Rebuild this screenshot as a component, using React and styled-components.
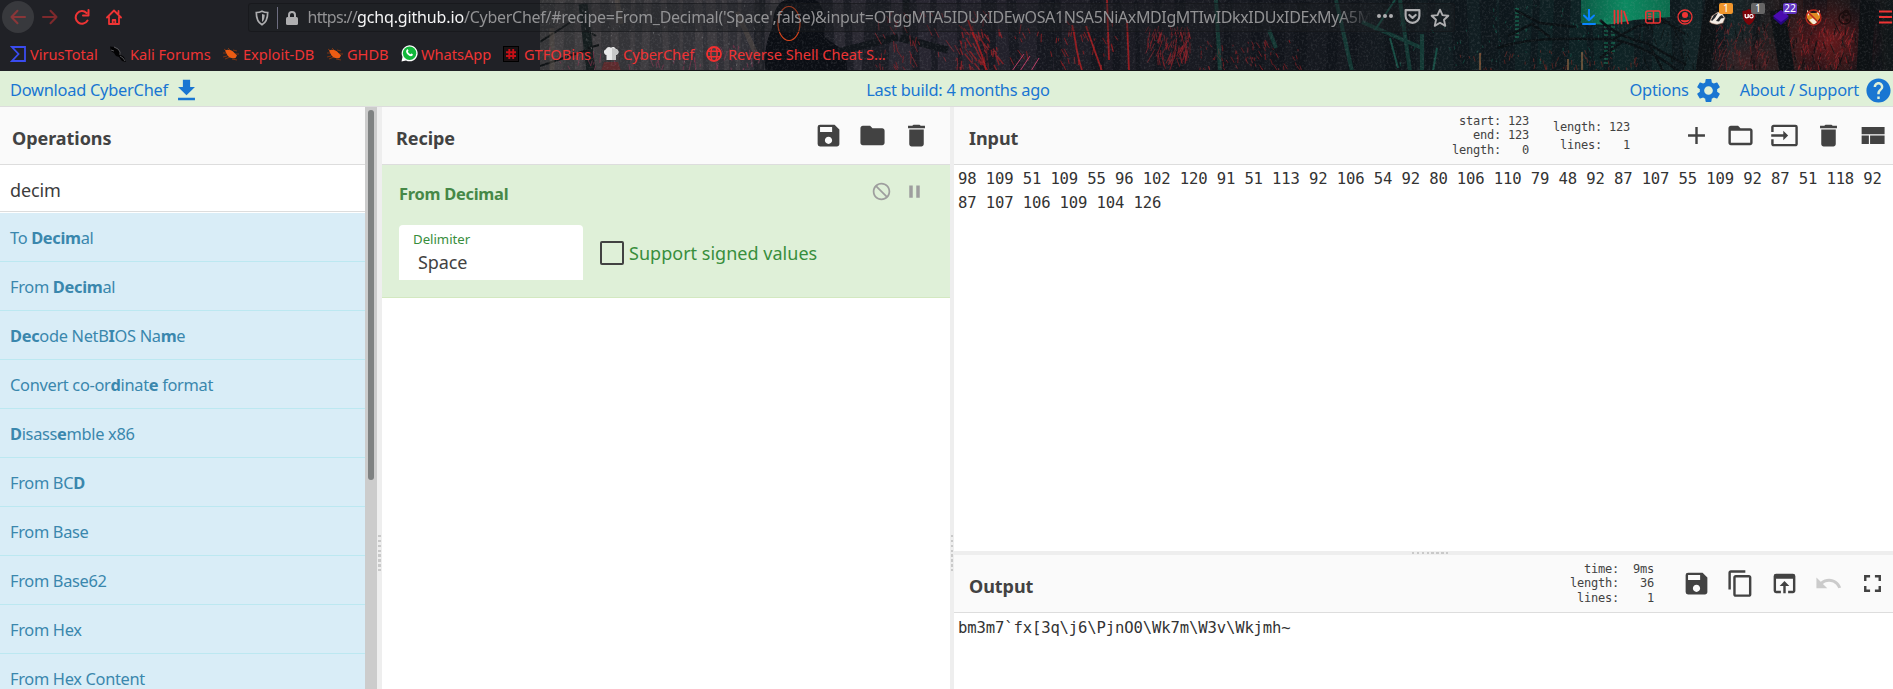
import React from "react";
import styled, { createGlobalStyle } from "styled-components";
import {
  MdSave, MdFolder, MdDelete, MdAdd, MdFolderOpen, MdInput, MdContentCopy,
  MdOpenInBrowser, MdUndo, MdFullscreen, MdSettings, MdHelp, MdPause, MdDoNotDisturb,
} from "react-icons/md";

const Global = createGlobalStyle`
  *, *::before, *::after { box-sizing: border-box; }
  html, body { margin: 0; height: 100%; overflow: hidden; background: #fff; }
  body { font-family: "Noto Sans", "Open Sans", sans-serif; color: #424242; }
  svg { display: block; flex: none; }
`;

const Page = styled.div`
  display: flex;
  flex-direction: column;
  width: 100vw;
  height: 689px;
  overflow: hidden;
`;

/* ---------- browser chrome ---------- */
const Chrome = styled.header`
  position: relative;
  flex: none;
  height: 71px;
  background: #202126;
  overflow: hidden;
  color: #ee3434;
`;
const Backdrop = styled.svg`
  position: absolute;
  top: 0;
  right: 0;
`;
const Toolbar = styled.div`
  position: relative;
  display: flex;
  height: 34px;
`;
const Slot = styled.div`
  position: relative;
  display: flex;
  flex: none;
  align-items: center;
  justify-content: center;
  width: 32px;
  height: 34px;
  opacity: ${(p) => (p.$dim ? 0.45 : 1)};
`;
const NavGroup = styled.div`
  display: flex;
  width: 249px;
  padding-left: 2px;
`;
const BackCircle = styled.div`
  display: flex;
  align-items: center;
  justify-content: center;
  width: 32px;
  height: 32px;
  margin-top: 1px;
  border-radius: 50%;
  background: #38393d;
`;
const UrlBar = styled.div`
  display: flex;
  align-items: center;
  width: 1209px;
  height: 29px;
  margin-top: 3px;
  padding-left: 5px;
  border: 1px solid rgba(20, 20, 24, 0.55);
  border-radius: 3px;
  background: rgba(32, 33, 38, 0.35);
  color: #aeaeb0;
`;
const UrlDivider = styled.span`
  width: 1px;
  height: 22px;
  margin: 0 7px 0 7px;
  background: #6d6d80;
`;
const UrlText = styled.div`
  width: 1066px;
  margin-left: 8px;
  white-space: nowrap;
  font-size: 16px;
  line-height: 27px;
  color: #929294;
  mask-image: linear-gradient(to right, #000 calc(100% - 36px), transparent calc(100% - 2px));
`;
const UrlPart = styled.span`
  letter-spacing: ${(p) => p.$spacing}px;
  color: ${(p) => (p.$host ? "#f5f5f6" : "inherit")};
`;
const UrlActions = styled.div`
  display: flex;
  gap: 9px;
  margin-left: 2px;
`;
const Extensions = styled.div`
  display: flex;
  margin-left: 118px;
`;
const Badge = styled.span`
  position: absolute;
  top: 3px;
  left: 18px;
  min-width: 14px;
  height: 11px;
  padding: 0 1px;
  border-radius: 2px;
  background: ${(p) => p.$color};
  color: #fff;
  font-size: 10.5px;
  line-height: 11px;
  text-align: center;
`;
const Bookmarks = styled.nav`
  position: relative;
  display: flex;
  align-items: center;
  height: 39px;
  padding-left: 10px;
`;
const Bookmark = styled.a`
  display: flex;
  align-items: center;
  gap: ${(p) => p.$gap || 4}px;
  width: ${(p) => p.$width}px;
  font-size: 14.6px;
  line-height: 20px;
  white-space: nowrap;
`;

/* ---------- app ---------- */
const Banner = styled.div`
  display: grid;
  grid-template-columns: 1fr auto 1fr;
  flex: none;
  height: 36px;
  padding-left: 10px;
  border-bottom: 1px solid #ddd;
  background: #dff0d8;
  color: #1976d2;
  font-size: 16.4px;
  line-height: 38px;
  white-space: nowrap;
`;
const BannerSide = styled.div`
  display: flex;
  justify-content: ${(p) => (p.$end ? "flex-end" : "flex-start")};
`;
const BannerItem = styled.a`
  display: flex;
  gap: ${(p) => p.$gap || 0}px;
  margin-left: ${(p) => p.$ml || 0}px;
  letter-spacing: -0.25px;
  svg { margin-top: 5px; }
`;
const Workspace = styled.main`
  display: flex;
  flex: 1;
  min-height: 0;
`;
const OpsColumn = styled.section`
  display: flex;
  width: 377px;
  overflow: hidden;
`;
const OpsBody = styled.div`
  width: 365px;
`;
const ScrollTrack = styled.div`
  width: 12px;
  padding: 3px 3px 0;
  background: #ccc;
`;
const ScrollThumb = styled.div`
  height: 370px;
  border-radius: 3px;
  background: #7f8282;
`;
const ColumnGutter = styled.div`
  display: flex;
  flex: none;
  align-items: center;
  justify-content: center;
  width: ${(p) => p.$size}px;
  padding-top: 311px;
  background: #eee;
`;
const RowGutter = styled.div`
  display: flex;
  flex: none;
  align-items: center;
  justify-content: center;
  height: 4px;
  padding-left: 14px;
  background: #eee;
`;
const Grip = styled.i`
  width: ${(p) => (p.$horizontal ? 37 : p.$thick)}px;
  height: ${(p) => (p.$horizontal ? 2 : 37)}px;
  background: repeating-linear-gradient(
    ${(p) => (p.$horizontal ? "90deg" : "180deg")},
    #c9c9c9 0 2.4px, transparent 2.4px 4.86px
  );
`;
const TitleBar = styled.div`
  display: flex;
  align-items: center;
  height: 58px;
  padding-left: ${(p) => p.$pad}px;
  border-bottom: 1px solid #ddd;
  background: #fafafa;
`;
const Title = styled.h2`
  flex: 1;
  margin: 5px 0 0;
  font-size: 18px;
  font-weight: 700;
  line-height: 26px;
  letter-spacing: -0.05px;
`;
const IconRow = styled.div`
  display: flex;
  gap: 15px;
  margin-right: ${(p) => p.$right}px;
  color: #424242;
`;
const Faded = styled.span`
  opacity: 0.25;
`;
const SearchBox = styled.div`
  height: 47px;
  margin-bottom: 1px;
  padding: 0 10px;
  border-bottom: 1px solid #ddd;
  font-size: 18px;
  line-height: 50px;
  letter-spacing: -0.1px;
  color: #3c3c3c;
`;
const OpItem = styled.div`
  height: 49px;
  padding-left: 10px;
  border-bottom: 1px solid #bce8f1;
  background: #d9edf7;
  color: #3a87ad;
  font-size: 16.4px;
  line-height: 50px;
  letter-spacing: -0.32px;
  white-space: nowrap;
`;
const RecipeColumn = styled.section`
  width: 568px;
`;
const Ingredient = styled.div`
  height: 133px;
  padding: 14px 17px 0;
  border-bottom: 1px solid #d3e8c0;
  background: #dff0d8;
  color: #3a8a3e;
`;
const IngredientHead = styled.div`
  display: flex;
  justify-content: space-between;
  height: 46px;
  font-size: 16.4px;
  font-weight: 700;
  line-height: 30px;
  letter-spacing: -0.25px;
  color: #468847;
`;
const IngredientIcons = styled.div`
  display: flex;
  gap: 12px;
  padding: 2px 8px 0 0;
  color: #9e9e9e;
`;
const IngredientArgs = styled.div`
  display: flex;
`;
const SelectBox = styled.div`
  width: 184px;
  height: 55px;
  padding: 5px 14px 0;
  border-radius: 4px 4px 0 0;
  background: #fff;
`;
const SelectLabel = styled.div`
  font-size: 13.2px;
  line-height: 18px;
  color: #388e3c;
`;
const SelectValue = styled.div`
  padding-left: 5px;
  font-size: 18px;
  line-height: 28px;
  letter-spacing: -0.1px;
  color: #424242;
`;
const CheckLabel = styled.label`
  display: flex;
  align-items: center;
  gap: 5px;
  height: 55px;
  margin-left: 17px;
  font-size: 18px;
  letter-spacing: 0.02px;
  color: #388e3c;
`;
const CheckBox = styled.span`
  width: 24px;
  height: 24px;
  border: 2px solid #424242;
  border-radius: 2px;
`;
const IoColumn = styled.section`
  display: flex;
  flex: 1;
  flex-direction: column;
  min-width: 0;
`;
const InputPane = styled.div`
  height: 444px;
`;
const OutputPane = styled.div`
  flex: 1;
`;
const Stats = styled.pre`
  margin: 0 ${(p) => p.$right}px 0 0;
  font-family: "DejaVu Sans Mono", monospace;
  font-size: 12px;
  letter-spacing: -0.22px;
  line-height: ${(p) => p.$lh}px;
`;
const MonoText = styled.pre`
  margin: 0;
  padding: ${(p) => p.$top || 2}px 4px;
  font-family: "DejaVu Sans Mono", monospace;
  font-size: 15.6px;
  line-height: 24px;
  letter-spacing: -0.15px;
  color: #333;
`;

/* ---------- wallpaper behind the browser chrome ---------- */
function makeRandom(seed) {
  let s = seed;
  return () => {
    s = (s * 16807) % 2147483647;
    return s / 2147483647;
  };
}
function strokes(seed, n, x0, x1, y0, y1, lean, len) {
  const r = makeRandom(seed);
  let d = "";
  for (let i = 0; i < n; i++) {
    const x = x0 + r() * (x1 - x0);
    const y = y0 + r() * (y1 - y0);
    const l = len * (0.3 + r());
    d += `M${x.toFixed(1)} ${y.toFixed(1)}l${((r() - 0.5 + lean) * l).toFixed(1)} ${l.toFixed(1)}`;
  }
  return d;
}
function trunks(seed, n, x0, x1) {
  const r = makeRandom(seed);
  return Array.from({ length: n }, (_, i) => {
    const x = x0 + ((i + r() * 0.7) * (x1 - x0)) / n;
    return { x, w: 4 + r() * 13, lean: (r() - 0.5) * 8 };
  });
}
function Forest() {
  return (
    <Backdrop width="1353" height="71" viewBox="540 0 1353 71" fill="none">
      <defs>
        <linearGradient id="night">
          <stop offset="0" stopColor="#373739" />
          <stop offset=".14" stopColor="#303036" />
          <stop offset=".3" stopColor="#26242f" />
          <stop offset=".42" stopColor="#1b1b23" />
          <stop offset=".6" stopColor="#14181e" />
          <stop offset=".78" stopColor="#0d2224" />
          <stop offset=".88" stopColor="#142326" />
          <stop offset=".94" stopColor="#2c1718" />
          <stop offset="1" stopColor="#101719" />
        </linearGradient>
        <radialGradient id="ember">
          <stop stopColor="#8f1a1d" stopOpacity=".65" />
          <stop offset="1" stopColor="#631317" stopOpacity="0" />
        </radialGradient>
        <linearGradient id="sky" x2="1">
          <stop stopColor="#0b5a45" />
          <stop offset=".5" stopColor="#0c8a61" />
          <stop offset="1" stopColor="#0c6b4c" />
        </linearGradient>
        <filter id="grain" x="0" y="0" width="100%" height="100%">
          <feTurbulence type="fractalNoise" baseFrequency=".45" numOctaves="2" seed="4" />
          <feColorMatrix values="0 0 0 0 .4  0 0 0 0 .4  0 0 0 0 .42  1.6 0 0 0 -.75" />
        </filter>
      </defs>
      <rect x="540" width="1353" height="71" fill="url(#night)" />
      {trunks(7, 15, 560, 800).map((t) => (
        <path key={t.x} d={`M${t.x} 0l${t.lean} 71`} stroke="#504c4d" strokeWidth={t.w * 0.6} opacity=".4" />
      ))}
      {trunks(19, 46, 760, 1893).map((t) => (
        <path key={t.x} d={`M${t.x} 0l${t.lean} 71`} stroke="#0c1015" strokeWidth={t.w} opacity=".5" />
      ))}
      <path d="M583 4l8 67" stroke="#151d1e" strokeWidth="9" />
      <path d="M540 42l34-22M540 66l50-17M586 30l10 6M588 48l11-3" stroke="#101416" strokeWidth="2" />
      <path d="M552 28v43M617 0l4 24M737 12l20 44" stroke="#66594f" strokeWidth="5" opacity=".4" />
      <path d="M604 62h14l3 9h-20z" fill="#5b2a2c" />
      <path d={strokes(31, 55, 550, 770, 45, 70, 0.1, 8)} stroke="#9b3355" opacity=".5" />
      <path d={strokes(33, 50, 550, 780, 0, 65, 0, 2)} stroke="#8a8a8c" opacity=".5" />
      <path d="M766 71c-4-16 2-34 6-43 1-12 3-24 13-28h31c10 8 10 22 8 36 4 6 20 11 22 20l1 15z" fill="#0b0e14" />
      <path d="M838 52l60-15M906 0v38M900 38l48 12" stroke="#11151a" strokeWidth="7" />
      <ellipse cx="789" cy="23.500" rx="11" ry="17" stroke="#d9441a" strokeWidth="1.2" />
      <path d={strokes(41, 70, 875, 990, 10, 68, 0.25, 9)} stroke="#7c2028" opacity=".8" />
      <path d={strokes(53, 38, 960, 1000, 25, 68, 0.35, 11)} stroke="#a41f25" strokeWidth="1.4" opacity=".7" />
      <path d={strokes(67, 40, 1010, 1115, 20, 66, 0.25, 8)} stroke="#901b21" opacity=".8" />
      <path d="M1072 25c4 12 3 26 10 45M1086 26l7 20 9 25M1107 0l2 60M1127 20l2 51M968 20c5 16 14 30 18 50" stroke="#a91c20" strokeWidth="1.8" opacity=".85" />
      <path d={strokes(71, 95, 1148, 1190, 26, 62, -0.1, 10)} stroke="#8d2028" opacity=".65" />
      <path d="M1012 71l12-17M1020 71l10-15M1031 71l8-13" stroke="#b93b63" />
      <path d={strokes(83, 70, 1200, 1300, 40, 70, 0.3, 5)} stroke="#7d1c22" opacity=".75" />
      <path d="M1216 0l4 71M1336 0l16 71M1362 22l60 26M1400 0l10 71M1422 34v37M1269 30l7 18" stroke="#16584a" strokeWidth="4" opacity=".5" />
      <path d="M1395 0l-20 30M1390 38l8 30M1437 48l-4 23" stroke="#174c43" strokeWidth="2" />
      <path d={strokes(91, 60, 1400, 1600, 5, 65, 0, 3)} stroke="#15705a" opacity=".45" />
      <path d={strokes(93, 55, 1460, 1640, 50, 70, 0.05, 5)} stroke="#6e2521" opacity=".65" />
      <path d="M1480 71v-18M1568 70v-11M1582 71V52" stroke="#9b6a42" strokeWidth="2" opacity=".6" />
      <path d="M1581 0h89v17l-36 3-28 5-25-2z" fill="url(#sky)" />
      <path d="M1606 18v48M1613 22v30M1517 8v30" stroke="#159369" strokeWidth="4" opacity=".4" strokeDasharray="2 2" />
      <path d="M1497 48c30-10 60-10 109-9 22 1 50 14 72 32M1515 10l25 13 36 4M1508 36l24-12 18 13M1600 20c12 12 30 20 46 23l40 22M1612 40l26-14 32-4M1622 42l-22 16M1650 46l13 25M1660 18l25 16" stroke="#0a1013" strokeWidth="2.500" />
      <ellipse cx="1828" cy="42" rx="56" ry="42" fill="url(#ember)" />
      <ellipse cx="1745" cy="62" rx="50" ry="30" fill="url(#ember)" opacity=".45" />
      <path d={strokes(97, 100, 1710, 1770, 22, 68, -0.2, 7)} stroke="#722025" opacity=".55" />
      <path d={strokes(99, 80, 1790, 1855, 18, 68, -0.2, 7)} stroke="#a82228" opacity=".55" />
      <path d="M1713 0l-10 71M1777 10l10 61M1868 0l-4 71" stroke="#0d1114" strokeWidth="15" />
      <path d={strokes(101, 120, 1640, 1893, 20, 68, 0, 9)} stroke="#0b1012" opacity=".8" />
      <rect x="540" width="1353" height="71" filter="url(#grain)" opacity=".25" />
      <path d="M540 70.500h1353" stroke="#151519" />
    </Backdrop>
  );
}

/* ---------- icons ---------- */
const Stroke = ({ d, w = 2, size = 16, color = "currentColor" }) => (
  <svg width={size} height={size} viewBox="0 0 16 16" fill="none" stroke={color} strokeWidth={w} strokeLinecap="round" strokeLinejoin="round">
    <path d={d} />
  </svg>
);
const ShieldIcon = () => (
  <svg width="16" height="16" viewBox="0 0 16 16" fill="none" stroke="currentColor" strokeWidth="1.700">
    <path d="M8 1.200c2 1 4 1.300 5.700 1.300 0 5.500-1 9.700-5.700 12.200C3.300 12.200 2.300 8 2.300 2.500 4 2.500 6 2.200 8 1.200z" />
    <path d="M8 4v8c2-1.500 2.600-4 2.700-7.200z" fill="currentColor" stroke="none" />
  </svg>
);
const LockIcon = () => (
  <svg width="14" height="16" viewBox="0 0 14 16">
    <path d="M4 8V5a3 3 0 0 1 6 0v3" fill="none" stroke="currentColor" strokeWidth="2" />
    <rect x="1" y="7" width="12" height="8" rx="1.500" fill="currentColor" />
  </svg>
);
const DotsIcon = () => (
  <svg width="20" height="16" viewBox="0 0 20 16" fill="currentColor">
    <circle cx="4" cy="8" r="2" /><circle cx="10" cy="8" r="2" /><circle cx="16" cy="8" r="2" />
  </svg>
);
const AccountIcon = () => (
  <svg width="16" height="16" viewBox="0 0 16 16" fill="currentColor">
    <circle cx="8" cy="8" r="7" fill="none" stroke="currentColor" strokeWidth="1.300" />
    <circle cx="8" cy="6" r="3" /><path d="M3.300 10.500c2 1 7.400 1 9.400 0-1.500 4-8 4-9.400 0z" />
  </svg>
);
const MenuIcon = () => (
  <svg width="32" height="16" viewBox="0 0 32 16">
    <path d="M18 2.500h13M18 8h13M18 13.500h13" stroke="currentColor" strokeWidth="2" />
  </svg>
);
const DownloadSolid = () => (
  <svg width="29" height="29" viewBox="0 0 24 24" fill="currentColor">
    <path d="M19 9h-4V3H9v6H5l7 7 7-7zM5 18v2h14v-2H5z" />
  </svg>
);
const ViewCompact = () => (
  <svg width="29" height="29" viewBox="0 0 24 24" fill="currentColor">
    <path d="M3 19h6v-7H3v7zm7 0h12v-7H10v7zM3 5v6h19V5H3z" />
  </svg>
);
const VirusTotalIcon = () => (
  <svg width="16" height="16" viewBox="0 0 16 16" fill="none" stroke="#3a4cf0" strokeWidth="1.800">
    <path d="M2 1h13v14H2l6.500-7z" />
  </svg>
);
const KaliIcon = () => (
  <svg width="16" height="16" viewBox="0 0 16 16">
    <path d="M0 .5l4 .5 4 2 2 3 1 3 3 2 2 5-4-1-3-4-3-1-2-3-3-2z" fill="#030304" />
    <path d="M4 1l4 2 2 3 0 3M1 4l3 1M10 10l3 2 2 3" stroke="#8a8a8e" strokeWidth=".6" fill="none" />
  </svg>
);
const BugIcon = () => (
  <svg width="16" height="16" viewBox="0 0 16 16">
    <path d="M1 3l4 3M5 2l3 3M0 7h4M2 13l5-2M9 13l5 1M11 8h5M10 4l4 1M0 11l4-1" stroke="#7c3412" />
    <path d="M2 4.500C5 3 9 4 11.500 7L14 9.500 12.500 12C9 13 6 11.500 4.500 9.500z" fill="#ec5c13" />
  </svg>
);
const WhatsAppIcon = () => (
  <svg width="17" height="17" viewBox="0 0 17 17">
    <path d="M.5 16.500l1-4.500A8 8 0 1 1 5 15.500z" fill="#fff" />
    <circle cx="8.600" cy="8.200" r="6.700" fill="#12b83b" />
    <path d="M5.500 5c1-1.400 1.700-.5 2 .8l-.7 1c.6 1.300 1.500 2 2.600 2.500l1-.9c1 .3 2 .8 1.300 1.900-1.500 1.900-3.700.6-5-.7C5.400 8.300 4.500 6.500 5.500 5z" fill="#fff" />
  </svg>
);
const HashIcon = () => (
  <svg width="16" height="16" viewBox="0 0 16 16">
    <rect x=".5" y=".5" width="15" height="15" fill="#1b1214" stroke="#000" />
    <path d="M6.300 3v10M10.200 3v10M3 6.200h10M3 10h10" stroke="#c50f16" strokeWidth="1.900" />
  </svg>
);
const ChefIcon = () => (
  <svg width="16" height="16" viewBox="0 0 16 16">
    <path d="M3.500 14V9C.5 8.600 0 4 3 3.300 4 .7 6.500.600 8 1.700c1.600-1.200 4-.8 4.700 1.300 3.500.3 4 5.200.3 6v5z" fill="#e9e9e9" />
    <path d="M9 2l4 1c3 .7 3 5 0 6v5H9z" fill="#c8c8c8" />
  </svg>
);
const GlobeIcon = () => (
  <svg width="16" height="16" viewBox="0 0 16 16" fill="none" stroke="#f03030" strokeWidth="1.400">
    <circle cx="8" cy="8" r="7" strokeWidth="1.800" />
    <path d="M2 5.300h12M2 10.700h12M6 1.500c-1.400 4-1.400 9 0 13M10 1.500c1.400 4 1.400 9 0 13" />
  </svg>
);
const BadgerIcon = () => (
  <svg width="17" height="15" viewBox="0 0 17 15">
    <path d="M.5 12L3 6l6-4 4 1 3 5-2 5-6 1.500-5-1z" fill="#f4ece4" stroke="#9b6a55" strokeWidth=".5" />
    <path d="M2 10l3-5 4-2-3 5-3 3zM7 11l4-5 2-1 2 3-3 .5-2 3z" fill="#24262a" />
  </svg>
);
const UblockIcon = () => (
  <svg width="16" height="16" viewBox="0 0 16 16">
    <path d="M8 0c2 1.300 4 2 6.500 2 0 6-.5 10.500-6.500 14C2 12.500 1.500 8 1.500 2 4 2 6 1.300 8 0z" fill="#7d0309" />
    <path d="M4.200 5v2.500c0 1.800 3 1.800 3 0V5M7.200 5v4" stroke="#fff" strokeWidth="1.300" fill="none" />
    <circle cx="10.400" cy="7.200" r="1.700" stroke="#fff" strokeWidth="1.200" fill="none" />
  </svg>
);
const LayersIcon = () => (
  <svg width="16" height="15" viewBox="0 0 16 15">
    <path d="M0 8l8-6 8 6-8 7z" fill="#26077c" />
    <path d="M0 6l8-6 8 6-8 6z" fill="#4a0bb0" />
  </svg>
);
const FoxIcon = () => (
  <svg width="17" height="17" viewBox="0 0 17 17">
    <path d="M2 1l4 3h5l4-3v8l-3 4-4 3-3-3-3-4z" fill="#e08a22" />
    <path d="M4 11l4-2 5 3-4 4z" fill="#f6ead6" />
    <path d="M2 1l3 3-2 3zM15 1l-3 3 2 3z" fill="#eee" />
    <circle cx="8.500" cy="8.500" r="7.500" fill="none" stroke="#b8261b" strokeWidth="1.300" />
    <path d="M3 3l11 11" stroke="#b8261b" strokeWidth="1.500" />
  </svg>
);
const CookieIcon = () => (
  <svg width="16" height="16" viewBox="0 0 16 16" fill="none" stroke="#1a0d0e" strokeWidth="1.300">
    <circle cx="8" cy="9" r="6" />
    <circle cx="6" cy="8" r="1" /><circle cx="10" cy="11" r="1" /><circle cx="9" cy="4" r="2.500" />
  </svg>
);

const bookmarks = [
  { name: "VirusTotal", icon: <VirusTotalIcon />, width: 100 },
  { name: "Kali Forums", icon: <KaliIcon />, width: 113, gap: 4 },
  { name: "Exploit-DB", icon: <BugIcon />, width: 104, gap: 4 },
  { name: "GHDB", icon: <BugIcon />, width: 74 },
  { name: "WhatsApp", icon: <WhatsAppIcon />, width: 102, gap: 3 },
  { name: "GTFOBins", icon: <HashIcon />, width: 100, gap: 5 },
  { name: "CyberChef", icon: <ChefIcon />, width: 103 },
  { name: "Reverse Shell Cheat S...", icon: <GlobeIcon />, width: 190, gap: 6 },
];

/* matched letters are wrapped in asterisks */
const operations = [
  "To *Decim*al", "From *Decim*al", "*Dec*ode NetB*I*OS Na*m*e", "Convert co-or*d*inat*e* format",
  "*D*isass*e*mble x86", "From BC*D*", "From Base", "From Base62", "From Hex", "From Hex Content",
];
const Highlighted = ({ text }) =>
  text.split("*").map((part, i) => (i % 2 ? <b key={i}>{part}</b> : part));

const inputText =
  "98 109 51 109 55 96 102 120 91 51 113 92 106 54 92 80 106 110 79 48 92 87 107 55 109 92 87 51 118 92\n87 107 106 109 104 126";

export default function App() {
  return (
    <Page>
      <Global />
      <Chrome>
        <Forest />
        <Toolbar>
          <NavGroup>
            <BackCircle><Slot $dim><Stroke d="M15 8H1.500M7.500 1.800L1.500 8l6 6.200" /></Slot></BackCircle>
            <Slot $dim><Stroke d="M1 8h13.500M8.500 1.800L14.500 8l-6 6.200" /></Slot>
            <Slot><Stroke d="M13.500 11.500A6.300 6.300 0 1 1 12.500 4M14.500 1v5.500H9" /></Slot>
            <Slot><Stroke d="M1 8.500L8 1.500l7 7M3 8v7h10V8M6.700 15v-4h2.600v4M12.500 2v3" w={1.8} /></Slot>
          </NavGroup>
          <UrlBar>
            <ShieldIcon />
            <UrlDivider />
            <LockIcon />
            <UrlText>
              <UrlPart $spacing={-0.7}>https://</UrlPart>
              <UrlPart $spacing={-0.15} $host>gchq.github.io</UrlPart>
              <UrlPart $spacing={-0.26}>/CyberChef/#recipe=From_Decimal('Space',false)&amp;input=</UrlPart>
              <UrlPart $spacing={-0.38}>OTggMTA5IDUxIDEwOSA1NSA5NiAxMDIgMTIwIDkxIDUxIDExMyA5M</UrlPart>
            </UrlText>
            <UrlActions>
              <DotsIcon />
              <Stroke size={17} d="M1.500 2h13v5.500a6.500 6.500 0 0 1-13 0zM5 6.500L8 9.300l3-2.800" />
              <Stroke size={20} w={1.5} d="M8 1.300l2 4.400 4.700.5-3.500 3.200 1 4.900L8 11.800l-4.200 2.500 1-4.900L1.300 6.200 6 5.700z" />
            </UrlActions>
          </UrlBar>
          <Extensions>
            <Slot><Stroke color="#0a84ff" d="M8 0v11M3 6.500L8 11.300l5-4.800M2 15h12" /></Slot>
            <Slot><Stroke d="M1.500 1.500v13M5 1.500v13M8.500 1.500v13M11 2.500l4 12" w={1.7} /></Slot>
            <Slot><Stroke d="M2.500 2h11a1.700 1.700 0 0 1 1.700 1.700v8.600a1.700 1.700 0 0 1-1.700 1.700h-11a1.700 1.700 0 0 1-1.700-1.700V3.700A1.700 1.700 0 0 1 2.500 2zM8.500 2v12M3.500 5h2.200M3.500 7.500h2.200M3.500 10h2.200" w={1.5} /></Slot>
            <Slot><AccountIcon /></Slot>
            <Slot><BadgerIcon /><Badge $color="#f0962c">1</Badge></Slot>
            <Slot><UblockIcon /><Badge $color="#666">1</Badge></Slot>
            <Slot><LayersIcon /><Badge $color="#6236c0">22</Badge></Slot>
            <Slot><FoxIcon /></Slot>
            <Slot><CookieIcon /></Slot>
          </Extensions>
          <Slot><MenuIcon /></Slot>
        </Toolbar>
        <Bookmarks>
          {bookmarks.map((b) => (
            <Bookmark key={b.name} $width={b.width} $gap={b.gap}>{b.icon}{b.name}</Bookmark>
          ))}
        </Bookmarks>
      </Chrome>

      <Banner>
        <BannerSide><BannerItem $gap={4}>Download CyberChef<DownloadSolid /></BannerItem></BannerSide>
        <BannerItem $ml={13}>Last build: 4 months ago</BannerItem>
        <BannerSide $end>
          <BannerItem $gap={5}>Options<MdSettings size={29} /></BannerItem>
          <BannerItem $gap={5} $ml={17}>About / Support<MdHelp size={29} /></BannerItem>
        </BannerSide>
      </Banner>

      <Workspace>
        <OpsColumn>
          <OpsBody>
            <TitleBar $pad={12}><Title>Operations</Title></TitleBar>
            <SearchBox>decim</SearchBox>
            {operations.map((op) => <OpItem key={op}><Highlighted text={op} /></OpItem>)}
          </OpsBody>
          <ScrollTrack><ScrollThumb /></ScrollTrack>
        </OpsColumn>
        <ColumnGutter $size={5}><Grip $thick={3} /></ColumnGutter>

        <RecipeColumn>
          <TitleBar $pad={14}>
            <Title>Recipe</Title>
            <IconRow $right={19}><MdSave size={29} /><MdFolder size={29} /><MdDelete size={29} /></IconRow>
          </TitleBar>
          <Ingredient>
            <IngredientHead>
              From Decimal
              <IngredientIcons><MdDoNotDisturb size={21} /><MdPause size={21} /></IngredientIcons>
            </IngredientHead>
            <IngredientArgs>
              <SelectBox>
                <SelectLabel>Delimiter</SelectLabel>
                <SelectValue>Space</SelectValue>
              </SelectBox>
              <CheckLabel><CheckBox />Support signed values</CheckLabel>
            </IngredientArgs>
          </Ingredient>
        </RecipeColumn>
        <ColumnGutter $size={4}><Grip $thick={2} /></ColumnGutter>

        <IoColumn>
          <InputPane>
            <TitleBar $pad={15}>
              <Title>Input</Title>
              <Stats $right={24} $lh={14.5}>{" start: 123\n   end: 123\nlength:   0"}</Stats>
              <Stats $right={52} $lh={18}>{"length: 123\n lines:   1"}</Stats>
              <IconRow $right={6}>
                <MdAdd size={29} /><MdFolderOpen size={29} /><MdInput size={29} /><MdDelete size={29} /><ViewCompact />
              </IconRow>
            </TitleBar>
            <MonoText>{inputText}</MonoText>
          </InputPane>
          <RowGutter><Grip $horizontal /></RowGutter>
          <OutputPane>
            <TitleBar $pad={15}>
              <Title>Output</Title>
              <Stats $right={28} $lh={14.5}>{"  time:  9ms\nlength:   36\n lines:    1"}</Stats>
              <IconRow $right={6}>
                <MdSave size={29} /><MdContentCopy size={29} /><MdOpenInBrowser size={29} />
                <Faded><MdUndo size={29} /></Faded><MdFullscreen size={29} />
              </IconRow>
            </TitleBar>
            <MonoText $top={3}>{"bm3m7`fx[3q\\j6\\PjnO0\\Wk7m\\W3v\\Wkjmh~"}</MonoText>
          </OutputPane>
        </IoColumn>
      </Workspace>
    </Page>
  );
}
